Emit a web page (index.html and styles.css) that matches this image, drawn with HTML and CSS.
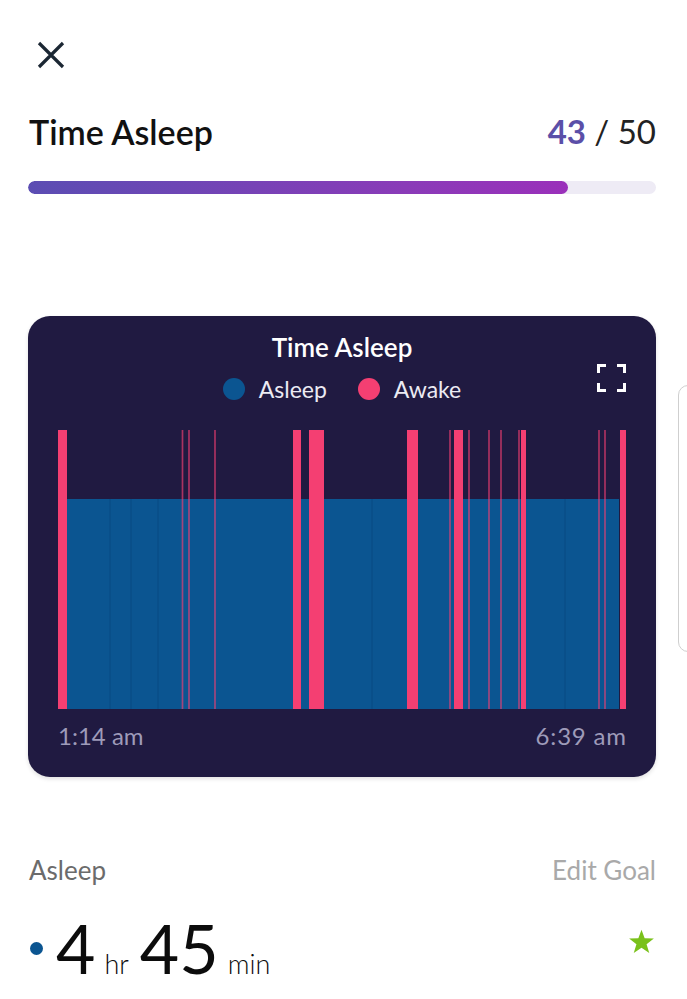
FILE: index.html
```html
<!DOCTYPE html>
<html>
<head>
<meta charset="utf-8">
<link rel="stylesheet" href="styles.css">
</head>
<body>
<div class="page">
  <div class="close">
    <svg width="28" height="28" viewBox="0 0 28 28"><path d="M2 2 L26 26 M26 2 L2 26" stroke="#1b2733" stroke-width="3.2" fill="none"/></svg>
  </div>
  <div class="header">
    <div class="h-title">Time Asleep</div>
    <div class="h-score"><span class="score-val">43</span> / 50</div>
  </div>
  <div class="progress"><div class="progress-fill" style="width:86%"></div></div>

  <div class="card">
    <div class="card-title">Time Asleep</div>
    <div class="legend">
      <span class="dot dot-blue"></span><span class="legend-label">Asleep</span>
      <span class="dot dot-pink"></span><span class="legend-label">Awake</span>
    </div>
    <svg class="expand" width="29" height="28" viewBox="0 0 29 28">
      <path d="M1.5 9 V1.5 H9 M20 1.5 H27.5 V9 M27.5 19 V26.5 H20 M9 26.5 H1.5 V19" stroke="#fff" stroke-width="3" fill="none"/>
    </svg>
    <svg class="plot" width="568" height="279" viewBox="0 0 568 279">
      <rect x="9" y="69" width="552" height="210" fill="#0b5591"/>
      <g stroke="#094b82" stroke-width="1">
        <line x1="52" y1="69" x2="52" y2="279"/>
        <line x1="73" y1="69" x2="73" y2="279"/>
        <line x1="100" y1="69" x2="100" y2="279"/>
        <line x1="314" y1="69" x2="314" y2="279"/>
        <line x1="507" y1="69" x2="507" y2="279"/>
      </g>
      <g fill="#f43f72">
        <rect x="0" y="0" width="9" height="279"/>
        <rect x="235" y="0" width="8" height="279"/>
        <rect x="251" y="0" width="15" height="279"/>
        <rect x="349" y="0" width="11" height="279"/>
        <rect x="396" y="0" width="9" height="279"/>
        <rect x="463" y="0" width="5" height="279"/>
        <rect x="562" y="0" width="6" height="279"/>
      </g>
      <g stroke="#f43f72" stroke-opacity="0.65" stroke-width="1.7">
        <line x1="124.5" y1="0" x2="124.5" y2="279"/>
        <line x1="131" y1="0" x2="131" y2="279"/>
        <line x1="157" y1="0" x2="157" y2="279"/>
        <line x1="392" y1="0" x2="392" y2="279"/>
        <line x1="411" y1="0" x2="411" y2="279"/>
        <line x1="431" y1="0" x2="431" y2="279"/>
        <line x1="443" y1="0" x2="443" y2="279"/>
        <line x1="461" y1="0" x2="461" y2="279"/>
        <line x1="541" y1="0" x2="541" y2="279"/>
        <line x1="547" y1="0" x2="547" y2="279"/>
      </g>
    </svg>
    <div class="axis">
      <span>1:14 am</span>
      <span class="axis-end">6:39 am</span>
    </div>
  </div>

  <div class="stat-head">
    <span class="stat-label">Asleep</span>
    <span class="edit-goal">Edit Goal</span>
  </div>
  <div class="stat-row">
    <div class="stat-value">
      <span class="stat-dot"></span>
      <span class="big">4</span><span class="unit">hr</span><span class="big">45</span><span class="unit">min</span>
    </div>
    <svg class="star" width="27" height="26" viewBox="0 0 24 23"><path d="M12 0.5 L14.8 8.2 L23 8.4 L16.5 13.4 L18.9 21.3 L12 16.6 L5.1 21.3 L7.5 13.4 L1 8.4 L9.2 8.2 Z" fill="#7ac11b"/></svg>
  </div>
</div>
<div class="side-tab"></div>
</body>
</html>
```

FILE: styles.css
```css
html, body {
  margin: 0;
  padding: 0;
  background: #fff;
}
body {
  font-family: Lato, "Open Sans", sans-serif;
  width: 687px;
  height: 999px;
  overflow: hidden;
  position: relative;
}
.page {
  padding: 0 31px 0 28px;
}
.close {
  padding-top: 41px;
  padding-left: 9px;
  height: 28px;
}
.close svg { display: block; }
.header {
  margin-top: 44px;
  display: flex;
  justify-content: space-between;
  align-items: center;
  height: 36px;
}
.h-title {
  font-size: 34px;
  font-weight: 600;
  color: #111;
  padding-left: 1px;
}
.h-score {
  font-size: 33px;
  color: #222;
}
.score-val {
  color: #5b4fa8;
  font-weight: 700;
}
.progress {
  margin-top: 32px;
  height: 13px;
  border-radius: 7px;
  background: #eeebf5;
  overflow: hidden;
}
.progress-fill {
  height: 100%;
  border-radius: 7px;
  background: linear-gradient(90deg, #5b4db3, #8a3bb8 70%, #9a30ba);
}
.card {
  margin-top: 122px;
  background: #201a41;
  border-radius: 22px;
  position: relative;
  padding: 17px 0 28px;
  box-shadow: 0 2px 4px rgba(0,0,0,0.12);
}
.card-title {
  text-align: center;
  color: #fff;
  font-size: 26px;
  font-weight: 600;
  line-height: 28px;
}
.legend {
  margin-top: 14px;
  height: 28px;
  display: flex;
  justify-content: center;
  align-items: center;
  color: #ecebf3;
  font-size: 23px;
}
.dot {
  width: 22px;
  height: 22px;
  border-radius: 50%;
  display: inline-block;
  margin-right: 14px;
}
.dot-blue { background: #0b5591; }
.dot-pink { background: #f43f72; margin-left: 31px; }
.expand {
  position: absolute;
  right: 30px;
  top: 48px;
}
.plot {
  display: block;
  margin: 27px 0 0 30px;
}
.axis {
  margin: 14px 30px 0 30px;
  display: flex;
  justify-content: space-between;
  color: #9e9bb9;
  font-size: 24px;
  line-height: 26px;
}
.axis-end { letter-spacing: 0.8px; margin-right: -0.8px; }
.stat-head {
  margin-top: 79px;
  display: flex;
  justify-content: space-between;
  line-height: 28px;
  font-size: 26px;
}
.stat-label { color: #6b6b6b; padding-left: 1px; }
.edit-goal { color: #a9a9a9; }
.stat-row {
  margin-top: 28px;
  display: flex;
  justify-content: space-between;
  align-items: flex-start;
}
.stat-value {
  display: flex;
  align-items: baseline;
  color: #0c0c0c;
}
.stat-dot {
  width: 13px;
  height: 13px;
  border-radius: 50%;
  background: #0b5591;
  margin: 0 13px 0 2px;
  align-self: center;
}
.big {
  font-size: 68px;
  line-height: 72px;
  font-weight: 400;
}
.unit {
  font-size: 27px;
  margin: 0 11px 0 9px;
  font-weight: 300;
}
.star {
  margin-top: 17px;
  margin-right: 1px;
}
.side-tab {
  position: absolute;
  left: 678px;
  top: 385px;
  width: 20px;
  height: 265px;
  border: 1.5px solid #cfcfcf;
  border-radius: 10px;
  background: #fff;
}
```
